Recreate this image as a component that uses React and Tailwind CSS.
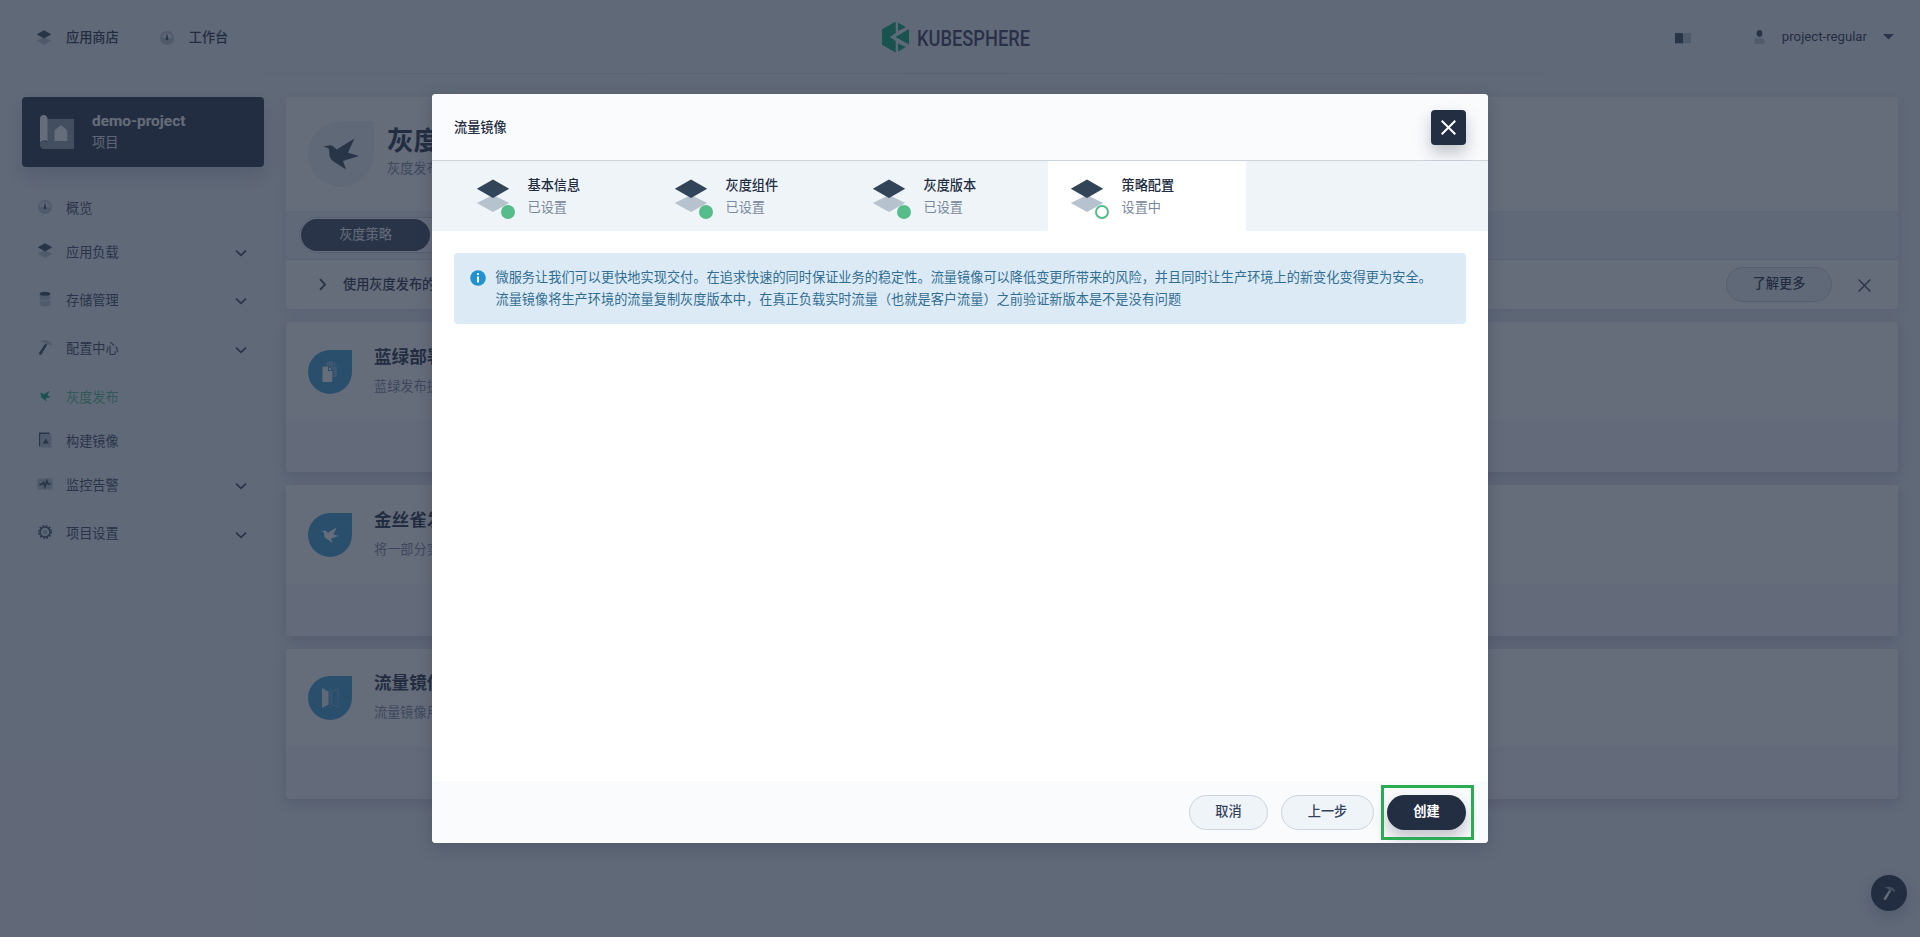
import React from "react";

const DARK = "#324558";
const LIGHT = "#b6c2cd";

function Layers({ size = 18, className = "" }) {
  return (
    <svg width={size} height={size} viewBox="0 0 40 40" className={className}>
      <path d="M20 18 36.2 26 20 35 3.8 26Z" fill={LIGHT} />
      <path d="M20 2.500 36.200 11.800 20 21 3.800 11.800Z" fill={DARK} />
    </svg>
  );
}

function Dashboard() {
  return (
    <svg width="18" height="18" viewBox="0 0 18 18">
      <circle cx="9" cy="9" r="7" fill={LIGHT} />
      <path d="M3.8 9a5.2 5.2 0 0 1 10.4 0Z" fill="#e6ecf2" />
      <path d="M9 4.200 10.200 9.400a1.300 1.300 0 1 1-2.400 0Z" fill={DARK} />
    </svg>
  );
}

function Database() {
  return (
    <svg width="18" height="18" viewBox="0 0 18 18">
      <path d="M3.7 4v4.6c0 1 2.4 1.8 5.3 1.8s5.3-.8 5.3-1.8V4ZM3.7 10v4.6c0 1 2.4 1.8 5.3 1.8s5.3-.8 5.3-1.8V10c-1.2 1-3 1.3-5.3 1.3S4.9 11 3.7 10Z" fill={LIGHT} />
      <ellipse cx="9" cy="3.7" rx="5.3" ry="2" fill={DARK} />
    </svg>
  );
}

function Hammer({ size = 18, handle = DARK, head = LIGHT }) {
  return (
    <svg width={size} height={size} viewBox="0 0 18 18">
      <path d="M9.300 5.600 3.200 14.700a1.200 1.200 0 0 0 .4 1.700l.4.2a1.200 1.200 0 0 0 1.700-.4L11.300 6.600Z" fill={handle} />
      <path d="M3.800 3.400C6 2 8.500 1.800 10.800 2.300l3.200 1.500c1 .6 1.600 1.800 1.900 3.200l-1.100.8-2.200-1.500-1.400.8-3.100-1.800c.3-1.200-2.400-2-4.300-1.900Z" fill={head} />
    </svg>
  );
}

function Bird({ size = 18, color = DARK }) {
  return (
    <svg width={size} height={size} viewBox="0 0 36 31">
      <path d="M0 8.300 5.500 7C8 6.200 10.300 7.200 11.800 9.200l1.900 1.700L31.500 0 25 14.300 36 17.400 23.700 21.300 20 22.500 23 31 10.900 23.200C7.500 21 6 18 6.300 14.500 6.500 11.500 6 9.500 3.500 8.900Z" fill={color} />
    </svg>
  );
}

function ImageFile() {
  return (
    <svg width="18" height="18" viewBox="0 0 18 18">
      <rect x="5" y="3" width="10.500" height="13.500" fill={LIGHT} />
      <path d="M3 1.500h10.500v1.400H4.400v12.600H3Z" fill={DARK} />
      <path d="M9.800 7.600 13 12.400H6.700Z" fill={DARK} />
    </svg>
  );
}

function Monitor() {
  return (
    <svg width="18" height="18" viewBox="0 0 18 18">
      <rect x="1.500" y="3.500" width="15" height="11" rx=".8" fill={LIGHT} />
      <path d="M3.200 9.500h2.300l2-2.300 1.400 4.600 2-5.800 1.200 3h2.500" stroke={DARK} strokeWidth="1.700" fill="none" />
    </svg>
  );
}

function Gear() {
  return (
    <svg width="18" height="18" viewBox="0 0 18 18">
      <circle cx="9" cy="9" r="6.300" fill="none" stroke={DARK} strokeWidth="1.700" strokeDasharray="1.650 1.650" />
      <circle cx="9" cy="9" r="5" fill="none" stroke={DARK} strokeWidth="1.500" />
      <circle cx="9" cy="9" r="2.600" fill={LIGHT} />
    </svg>
  );
}

function Chevron({ size = 12, className = "" }) {
  return (
    <svg width={size} height={size} viewBox="0 0 12 12" className={className}>
      <path d="M1 3.700 6 8.400 11 3.700" stroke={DARK} strokeWidth="1.700" fill="none" />
    </svg>
  );
}

function Cross({ size, color, width = 1.6 }) {
  return (
    <svg width={size} height={size} viewBox="0 0 15 15">
      <path d="M.7.7 14.300 14.300M14.300.7.7 14.300" stroke={color} strokeWidth={width} fill="none" />
    </svg>
  );
}

function Logo() {
  return (
    <svg width="180" height="36" viewBox="0 -1 180 36">
      <path d="M13.700 1.500V13L8 17l5.700 4v11.500L0 24.700V9.200Z" fill="#00aa72" />
      <path d="M16 2.500 24 7.300 16 11Z" fill="#00aa72" />
      <path d="M27 9v15.500L13.500 17Z" fill="#00aa72" />
      <path d="M16 23.400 24 27 16 31.500Z" fill="#00aa72" />
      <text x="35" y="25.500" textLength="113" lengthAdjust="spacingAndGlyphs" fontSize="22.500" className="font-medium" fill="#373858" fontFamily="Roboto, sans-serif">
        KUBESPHERE
      </text>
    </svg>
  );
}

function TopBar() {
  return (
    <header className="flex h-[75px] items-center justify-between pl-[35px] pr-[26px]">
      <nav className="flex w-[600px] items-center font-medium">
        <Layers className="mt-px" />
        <span className="ml-[13px]">应用商店</span>
        <span className="ml-[39px] mt-px"><Dashboard /></span>
        <span className="ml-[13px]">工作台</span>
      </nav>
      <div className="-mr-[15px] flex w-[180px] pb-px"><Logo /></div>
      <div className="flex w-[600px] items-center justify-end">
        <svg width="16" height="12" viewBox="0 0 16 12" className="mr-[63px] mt-px">
          <path d="M0 1h7l1 .8V12l-1-.8H0Z" fill={DARK} />
          <path d="M8 1.800 9 1h7v10.200H9L8 12Z" fill={LIGHT} />
        </svg>
        <svg width="11" height="14" viewBox="0 0 11 14" className="mr-[17px]">
          <path d="M0 11.500C0 9 2 8 5.500 8S11 9 11 11.500C11 13.300 10 14 8 14H3C1 14 0 13.300 0 11.500Z" fill={LIGHT} />
          <ellipse cx="5.500" cy="3.400" rx="2.900" ry="3.400" fill={DARK} />
        </svg>
        <span className="-mt-px">project-regular</span>
        <svg width="11" height="6" viewBox="0 0 11 6" className="ml-[16px]">
          <path d="M0 0h11L5.500 5.500Z" fill={DARK} />
        </svg>
      </div>
    </header>
  );
}

const MENU = [
  { label: "概览", icon: <Dashboard /> },
  { label: "应用负载", icon: <Layers />, more: true },
  { label: "存储管理", icon: <Database />, more: true },
  { label: "配置中心", icon: <Hammer />, more: true },
  { label: "灰度发布", icon: <Bird size={12} color="#00aa72" />, active: true },
  { label: "构建镜像", icon: <ImageFile /> },
  { label: "监控告警", icon: <Monitor />, more: true },
  { label: "项目设置", icon: <Gear />, more: true },
];

function Sidebar() {
  return (
    <aside className="w-[242px]">
      <div className="flex h-[70px] items-center rounded-[4px] bg-[#242e42] pl-[18px] shadow-[0_9px_18px_0_rgba(39,50,71,0.2)]">
        <svg width="34" height="34" viewBox="0 0 34 34">
          <path d="M7 4h27v30H7Z" fill="#8f9bab" />
          <path d="M0 29c0-2 1.500-3 3.500-3S8 27.500 8 29.500V34H4c-2.500 0-4-1.500-4-5Z" fill="#8f9bab" />
          <path d="M0 4c0-2.500 1.500-4 3.700-4S7.500 1.500 7.500 4v22.500C6 25 2 25 0 27.500Z" fill="#fff" />
          <path d="M14.500 15.500 21 10l6.300 5.500V26H14.500Z" fill="#fff" />
        </svg>
        <div className="-mt-[2px] ml-[18px]">
          <div className="text-[15.400px] font-bold leading-[22px] text-white">demo-project</div>
          <div className="pt-px leading-[20px] text-[#e3e9ef]">项目</div>
        </div>
      </div>
      <ul className="mt-[19px]">
        {MENU.map((m) => (
          <li key={m.label} className={m.more ? "pb-[4.400px]" : ""}>
            <div className="flex h-[44px] items-center pl-[14px] pr-[17px]">
              <span className="-mt-[3px] flex w-[18px] justify-center">{m.icon}</span>
              <span className={m.active ? "ml-[12px] pt-px text-[#55bc8a]" : "ml-[12px] pt-px text-[#36435c]"}>{m.label}</span>
              {m.more && <Chevron className="ml-auto mt-[2px]" />}
            </div>
          </li>
        ))}
      </ul>
    </aside>
  );
}

function CopyIcon() {
  return (
    <svg width="16" height="22" viewBox="0 0 16 22">
      <path d="M5.500 .5H11V5.500H14.800V15a1 1 0 0 1-1 1h-2.300V9L8 5H4.500V1.500a1 1 0 0 1 1-1ZM12 1.200 14.600 4.500H12Z" fill="#7fb8dd" />
      <path d="M1.500 5.500H6V10H10.300V20a1 1 0 0 1-1 1h-7.800a1 1 0 0 1-1-1V6.500a1 1 0 0 1 1-1ZM7 5.800 10 9H7Z" fill="#fff" />
    </svg>
  );
}

function MirrorIcon() {
  return (
    <svg width="18" height="20" viewBox="0 0 18 20">
      <path d="M1 0 7.500 3.500v13L1 20Z" fill="#e8f2f9" />
      <path d="M9 0v20" stroke="#7fb8dd" strokeDasharray="2 1" strokeWidth=".9" />
      <path d="M17 .7 10.500 4v12L17 19.300Z" fill="none" stroke="#7fb8dd" strokeWidth=".9" />
    </svg>
  );
}

const STRATEGIES = [
  { title: "蓝绿部署", desc: "蓝绿发布提供了一种零宕机的部署方式", icon: <CopyIcon /> },
  { title: "金丝雀发布", desc: "将一部分实际流量引入一个新版本进行测试", icon: <Bird size={18} color="#fff" /> },
  { title: "流量镜像", desc: "流量镜像用于将生产流量复制到新版本", icon: <MirrorIcon /> },
];

function Content() {
  return (
    <main className="flex flex-1 flex-col gap-[13px]">
      <section className="overflow-hidden rounded-[4px] bg-white shadow-[0_4px_14px_0_rgba(39,50,71,0.1)]">
        <div className="flex h-[114px] pl-[22px] pt-[24px]">
          <div className="flex h-[66px] w-[66px] items-center justify-center rounded-full rounded-tr-none bg-[#eff4f9]">
            <Bird size={36} />
          </div>
          <div className="ml-[13px] pt-[2px]">
            <h1 className="text-[26.400px] font-bold leading-[36px]">灰度发布</h1>
            <p className="pt-px leading-[18px] text-[#79879c]">灰度发布提供了灵活的发布策略</p>
          </div>
        </div>
        <div className="h-[49px] border-b border-[#d8dee5] bg-[#eff4f9] pl-[13px] pt-[6px]">
          <div className="h-[36px] w-[280px] rounded-full border border-[#ccd3db] bg-white p-px">
            <div className="flex h-full w-[129px] items-center justify-center rounded-full bg-[#36435c] text-white">
              <span className="-mt-px">灰度策略</span>
            </div>
          </div>
        </div>
        <div className="flex h-[49px] items-center pl-[30px] pr-[26px]">
          <Chevron size={13} className="-rotate-90" />
          <span className="ml-[14px] pt-px font-medium">使用灰度发布的前提条件</span>
          <button className="ml-auto h-[35px] w-[106px] rounded-full border border-[#ccd3db] bg-[#eff4f9] pb-[2px] font-medium">了解更多</button>
          <span className="ml-[26px] mr-px mt-[2px]"><Cross size={13} color={DARK} /></span>
        </div>
      </section>
      {STRATEGIES.map((s) => (
        <section key={s.title} className="h-[150.300px] overflow-hidden rounded-[4px] bg-[#f9fbfd] shadow-[0_4px_14px_0_rgba(39,50,71,0.22)]">
          <div className="flex h-[97.500px] bg-white pl-[22px] pt-[27.600px]">
            <div className="flex h-[44px] w-[44px] items-center justify-center rounded-full rounded-tr-none bg-[#3a9fd2]">
              {s.icon}
            </div>
            <div className="-mt-[5px] ml-[22px]">
              <h2 className="text-[17.600px] font-bold leading-[24px]">{s.title}</h2>
              <p className="mt-[8px] leading-[20px] text-[#79879c]">{s.desc}</p>
            </div>
          </div>
        </section>
      ))}
    </main>
  );
}

const STEPS = [
  { title: "基本信息", state: "已设置" },
  { title: "灰度组件", state: "已设置" },
  { title: "灰度版本", state: "已设置" },
  { title: "策略配置", state: "设置中", current: true },
];

function Modal() {
  return (
    <div className="mt-[94px] flex h-[749px] w-[1056px] flex-col overflow-hidden rounded-[4px] bg-white shadow-[0_4px_16px_0_rgba(39,50,71,0.28)]">
      <div className="flex h-[67px] items-center justify-between border-b border-[#ccd3db] bg-[#fafbfd] px-[22px]">
        <span className="pt-px font-medium">流量镜像</span>
        <button className="flex h-[35px] w-[35px] items-center justify-center rounded-[4px] bg-[#242e42] shadow-[0_8px_16px_0_rgba(35,45,65,0.28)]">
          <Cross size={15} color="#fff" width={2} />
        </button>
      </div>
      <div className="flex h-[70px] bg-[#eff4f8] pl-[22px]">
        {STEPS.map((s) => (
          <div key={s.title} className={s.current ? "flex w-[198px] bg-white pl-[19px] pt-[16px]" : "flex w-[198px] pl-[19px] pt-[16px]"}>
            <div className="relative h-[40px] w-[40px]">
              <Layers size={40} />
              <span className={s.current
                ? "absolute left-[28px] top-[27.500px] h-[14px] w-[14px] rounded-full border-2 border-[#55bc8a] bg-white"
                : "absolute left-[28px] top-[27.500px] h-[14px] w-[14px] rounded-full bg-[#55bc8a]"} />
            </div>
            <div className="-mt-[2px] ml-[14.500px] leading-[22px]">
              <div className="font-medium">{s.title}</div>
              <div className="text-[#79879c]">{s.state}</div>
            </div>
          </div>
        ))}
      </div>
      <div className="flex-1 p-[22px]">
        <div className="flex h-[71px] rounded-[4px] bg-[#dceaf5] pl-[16px] pt-[14px] text-[#326e93]">
          <svg width="16" height="16" viewBox="0 0 16 16" className="mt-[2.500px]">
            <circle cx="8" cy="8" r="7.800" fill="#1f92cf" />
            <path d="M7 3.200h2v1.900H7ZM7 6.400h2v6.200H7Z" fill="#fff" />
          </svg>
          <p className="ml-[9.500px] leading-[22px]">
            微服务让我们可以更快地实现交付。在追求快速的同时保证业务的稳定性。流量镜像可以降低变更所带来的风险，并且同时让生产环境上的新变化变得更为安全。
            <br />
            流量镜像将生产环境的流量复制灰度版本中，在真正负载实时流量（也就是客户流量）之前验证新版本是不是没有问题
          </p>
        </div>
      </div>
      <div className="flex h-[62px] items-start justify-end gap-[13px] bg-[#fafbfd] pr-[22px] pt-[14px]">
        <button className="h-[35px] w-[79px] rounded-full border border-[#ccd3db] bg-[#eff4f9] pb-[2px] font-medium text-[#36435c]">取消</button>
        <button className="h-[35px] w-[93px] rounded-full border border-[#ccd3db] bg-[#eff4f9] pb-[2px] font-medium text-[#36435c]">上一步</button>
        <div className="relative">
          <button className="h-[35px] w-[79px] rounded-full bg-[#242e42] pb-[2px] font-bold text-white shadow-[0_8px_16px_0_rgba(35,45,65,0.28)]">创建</button>
          <span className="absolute -left-[6px] -top-[10px] h-[55px] w-[93px] border-[3px] border-[#2bab54]" />
        </div>
      </div>
    </div>
  );
}

export default function App() {
  return (
    <div className="relative h-[937px] w-full overflow-hidden bg-[#eff4f9] font-[Roboto,'Noto_Sans_CJK_SC',sans-serif] text-[13.200px] text-[#242e42]">
      <TopBar />
      <div className="mx-[264px] -mt-[2px] h-px bg-linear-to-r from-[#e6ecf2] via-[#d3dae2] to-[#eaf0f5]" />
      <div className="flex gap-[22px] px-[22px] pt-[23px]">
        <Sidebar />
        <Content />
      </div>
      <div className="absolute left-[1871px] top-[875px] flex h-[36px] w-[36px] items-center justify-center rounded-full bg-[#242e42] shadow-[0_6px_16px_0_rgba(36,46,66,0.25)]">
        <Hammer size={16} handle="#fff" head="#8f9bab" />
      </div>
      <div className="absolute inset-0 flex items-start justify-center bg-[rgba(36,46,66,0.7)]">
        <Modal />
      </div>
    </div>
  );
}
